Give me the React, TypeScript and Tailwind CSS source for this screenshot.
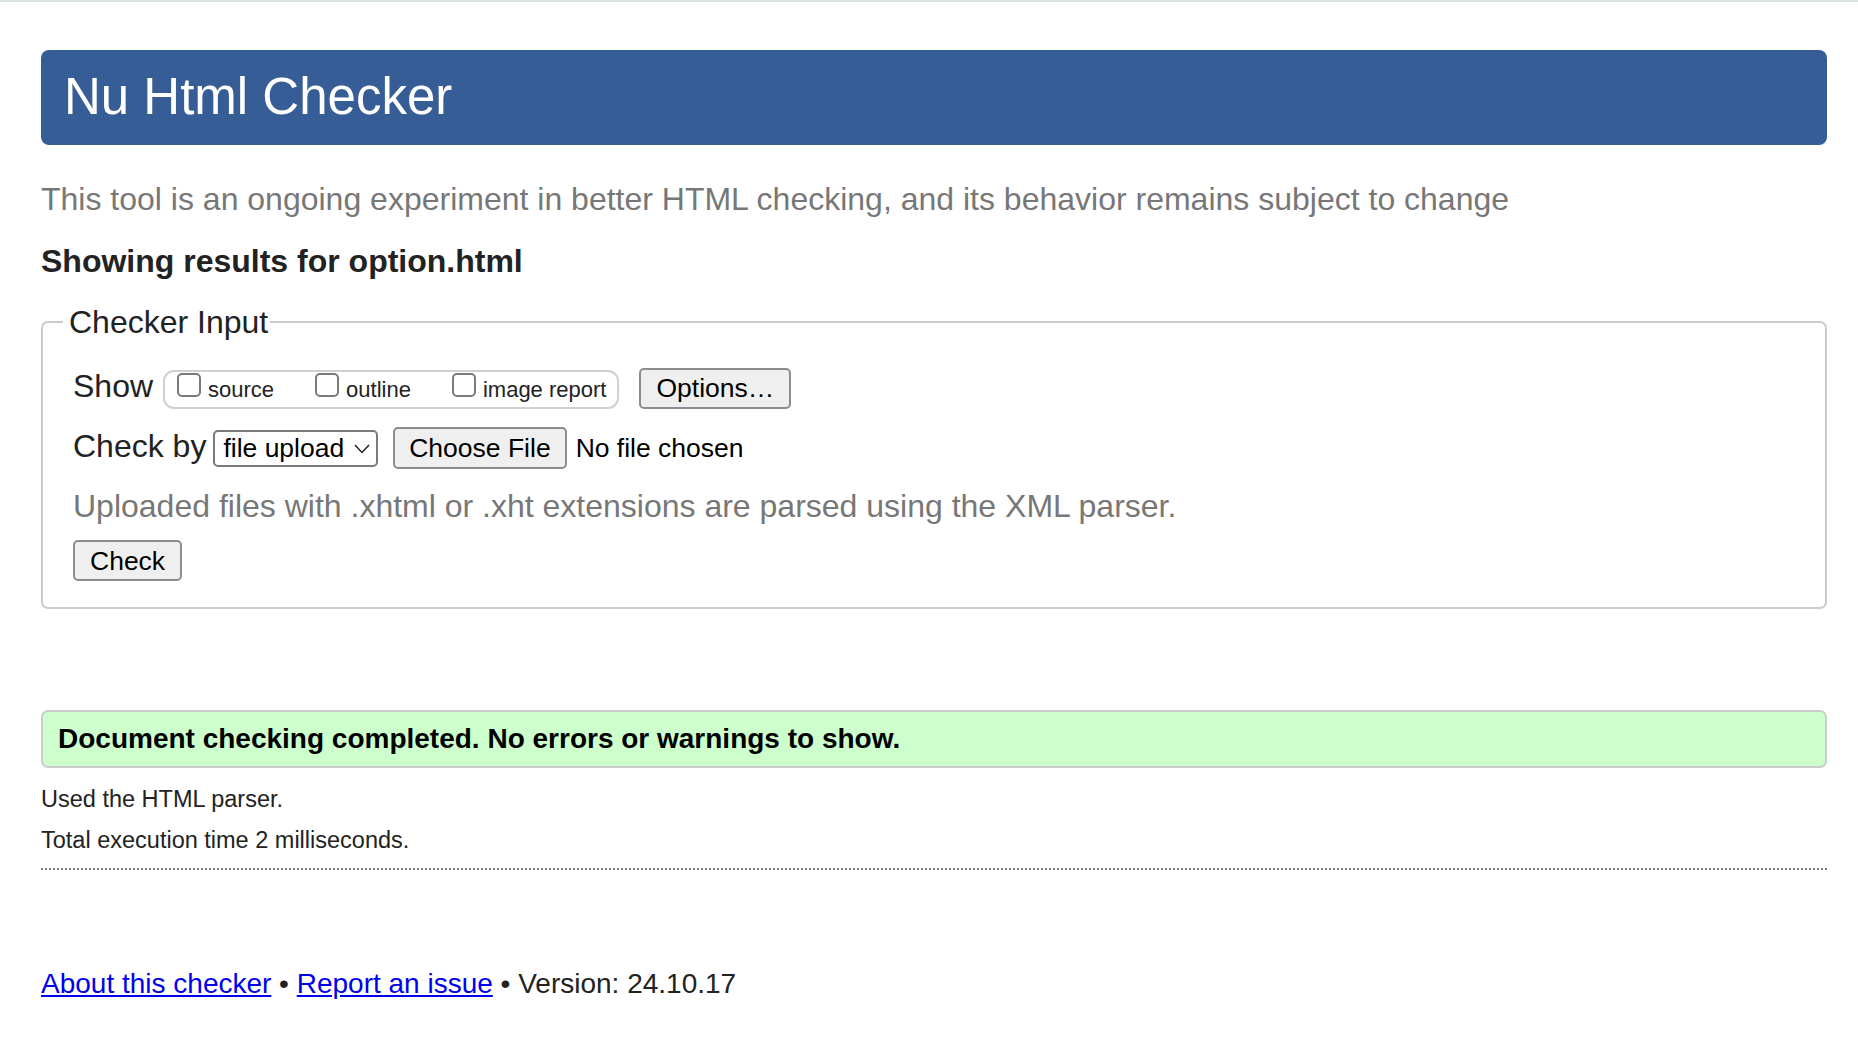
import React from 'react'

const Checkbox = ({ label }: { label: string }) => (
  <label className="flex items-baseline gap-[7px]">
    <input
      type="checkbox"
      className="appearance-none w-[24px] h-[24px] border-2 border-[#7a7a7a] rounded-[5px] bg-white"
    />
    <span className="text-[22px] leading-[24px]">{label}</span>
  </label>
)

const Button = ({ children, className = '' }: { children: React.ReactNode; className?: string }) => (
  <button
    className={
      'bg-[#efefef] border-2 border-[#8c8c8c] rounded-[5px] text-[26.5px] leading-none text-black ' + className
    }
  >
    {children}
  </button>
)

export default function App() {
  return (
    <div className="min-h-screen bg-white border-t-2 border-[#dae3e6] font-['Liberation_Sans',Arial,sans-serif] text-[#222]">
      <div className="pl-[41px] pr-[31px] pt-[48px] pb-10">
        <h1 className="h-[95px] flex items-center bg-[#365d95] rounded-[8px] pl-[23px] text-white text-[51px]">
          Nu Html Checker
        </h1>

        <p className="mt-[34px] text-[32px] leading-[40px] text-[#777]">
          This tool is an ongoing experiment in better HTML checking, and its behavior remains subject to change
        </p>

        <h2 className="mt-[22px] text-[32px] leading-[40px] font-bold">Showing results for option.html</h2>

        <fieldset className="mt-[21px] border-2 border-[#cccccc] rounded-[7px] px-[20px] pb-[26px]">
          <legend className="text-[32px] leading-[40px] pl-[6px] pr-[2px]">Checker Input</legend>

          <div className="pl-[10px] pt-[26px]">
            <div className="flex items-baseline">
              <span className="text-[32px] leading-[36px]">Show</span>
              <div className="ml-[10px] flex items-baseline gap-[41px] border-2 border-[#d0d0d0] rounded-[11px] pl-[12px] pr-[11px] pt-[1px] pb-[5px]">
                <Checkbox label="source" />
                <Checkbox label="outline" />
                <Checkbox label="image report" />
              </div>
              <Button className="ml-[20px] h-[41px] px-[15px]">Options…</Button>
            </div>

            <div className="mt-[18px] flex items-baseline">
              <span className="text-[32px] leading-[36px]">Check by</span>
              <div className="ml-[7px] h-[37px] flex items-center border-2 border-[#7a7a7a] rounded-[5px] pl-[8px] pr-[6px] text-[26.5px] text-black">
                <span>file upload</span>
                <svg className="ml-[10px]" width="16" height="10" viewBox="0 0 16 10" fill="none">
                  <polyline points="1,1 8,8.5 15,1" stroke="#222" strokeWidth="1.5" />
                </svg>
              </div>
              <Button className="ml-[15px] h-[42px] px-[14px]">Choose File</Button>
              <span className="ml-[9px] text-[26.5px] text-black">No file chosen</span>
            </div>

            <p className="mt-[19px] text-[32px] leading-[36px] text-[#777]">
              Uploaded files with .xhtml or .xht extensions are parsed using the XML parser.
            </p>

            <Button className="mt-[16px] h-[41px] px-[15px]">Check</Button>
          </div>
        </fieldset>

        <div className="mt-[101px] bg-[#ccffcc] border-2 border-[#cccccc] rounded-[7px] pl-[15px] pt-[10px] pb-[10px]">
          <p className="text-[28px] leading-[34px] font-bold text-black">
            Document checking completed. No errors or warnings to show.
          </p>
        </div>

        <p className="mt-[13px] text-[23.5px] leading-[36px]">Used the HTML parser.</p>
        <p className="mt-[5px] text-[23.5px] leading-[36px]">Total execution time 2 milliseconds.</p>

        <hr className="mt-[10px] border-0 border-t-2 border-dotted border-[#777]" />

        <p className="mt-[96px] text-[28px] leading-[36px]">
          <a href="#" className="text-[#0000ee] underline">About this checker</a>
          {' • '}
          <a href="#" className="text-[#0000ee] underline">Report an issue</a>
          {' • Version: 24.10.17'}
        </p>
      </div>
    </div>
  )
}
